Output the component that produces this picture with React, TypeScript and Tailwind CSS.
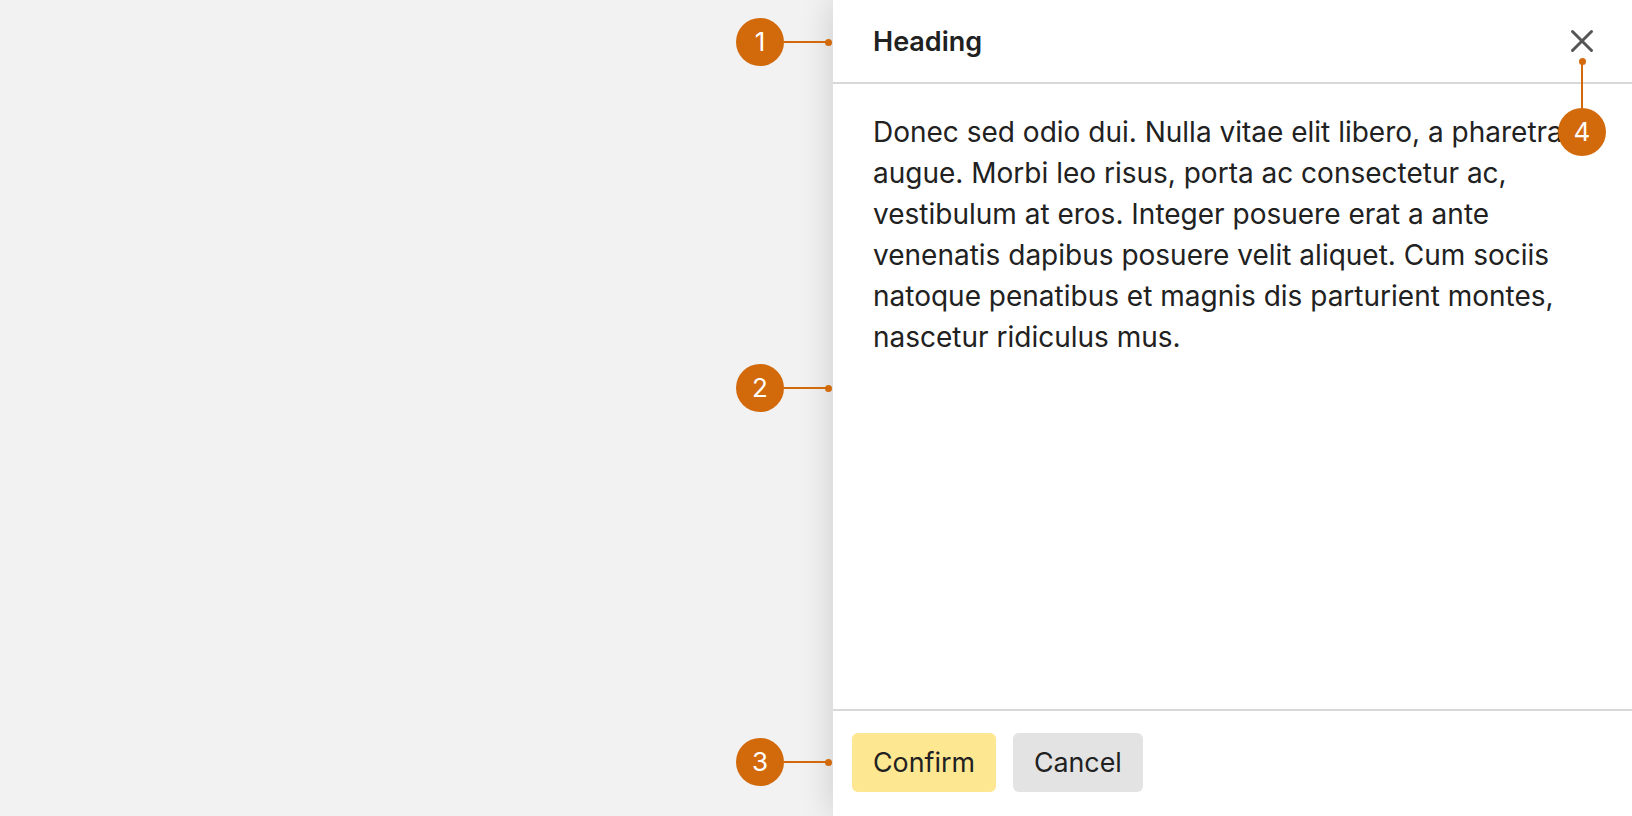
import { X } from "lucide-react"

const font = { fontFamily: "Inter, 'Noto Sans', sans-serif" }

function Badge({ n, className }: { n: string; className: string }) {
  return (
    <div
      className={`absolute flex h-[48px] w-[48px] items-center justify-center rounded-full bg-[#d26a0b] text-[26px] leading-none text-white ${className}`}
    >
      {n}
    </div>
  )
}

function SideMarker({ n, top }: { n: string; top: string }) {
  return (
    <div className={`absolute left-[736px] flex items-center ${top}`}>
      <div className="flex h-[48px] w-[48px] items-center justify-center rounded-full bg-[#d26a0b] text-[26px] leading-none text-white">
        {n}
      </div>
      <div className="h-[2px] w-[44px] bg-[#d26a0b]" />
      <div className="-ml-[3px] h-[7px] w-[7px] rounded-full bg-[#d26a0b]" />
    </div>
  )
}

export default function App() {
  return (
    <div className="relative flex h-[816px] w-full overflow-hidden bg-[#f2f2f2]" style={font}>
      <div className="flex-1" />

      <div className="relative flex w-[799px] flex-col bg-white text-[#212121] shadow-[0_0_34px_rgba(0,0,0,0.16)]">
        <div className="flex h-[84px] shrink-0 items-center justify-between border-b-2 border-[#d8d8d8] pl-[40px] pr-[31px]">
          <h2 className="pt-[2px] text-[27px] font-semibold">Heading</h2>
          <button type="button" className="text-[#555555]">
            <X className="h-[38px] w-[38px]" strokeWidth={1.9} />
          </button>
        </div>

        <div className="flex-1 px-[40px] pt-[28px]">
          <p className="text-[28px] leading-[41px]">
            Donec sed odio dui. Nulla vitae elit libero, a pharetra augue. Morbi leo risus, porta ac
            consectetur ac, vestibulum at eros. Integer posuere erat a ante venenatis dapibus posuere
            velit aliquet. Cum sociis natoque penatibus et magnis dis parturient montes, nascetur
            ridiculus mus.
          </p>
        </div>

        <div className="flex h-[107px] shrink-0 items-start gap-[17px] border-t-2 border-[#d8d8d8] px-[19px] pt-[22px]">
          <button
            type="button"
            className="h-[59px] rounded-[6px] bg-[#fde791] px-[21px] text-[26.8px] text-[#212121]"
          >
            Confirm
          </button>
          <button
            type="button"
            className="h-[59px] rounded-[6px] bg-[#e3e3e3] px-[21px] text-[26.8px] text-[#212121]"
          >
            Cancel
          </button>
        </div>
      </div>

      <SideMarker n="1" top="top-[18px]" />
      <SideMarker n="2" top="top-[364px]" />
      <SideMarker n="3" top="top-[738px]" />

      <div className="absolute left-[1579px] top-[58px] h-[7px] w-[7px] rounded-full bg-[#d26a0b]" />
      <div className="absolute left-[1581px] top-[61px] h-[48px] w-[2px] bg-[#d26a0b]" />
      <Badge n="4" className="left-[1558px] top-[108px]" />
    </div>
  )
}
